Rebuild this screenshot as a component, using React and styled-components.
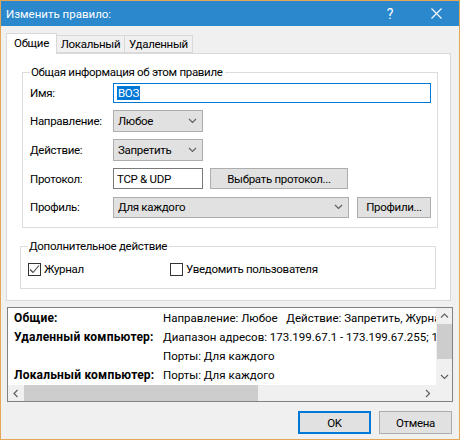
import React from 'react'
import styled, { createGlobalStyle } from 'styled-components'

const GlobalStyle = createGlobalStyle`
  html, body {
    margin: 0;
    padding: 0;
    background: #f0f0f0;
  }
  * {
    box-sizing: border-box;
  }
`

const Window = styled.div`
  width: 460px;
  height: 440px;
  border: 1px solid #e2a857;
  background: #f0f0f0;
  display: flex;
  flex-direction: column;
  font-family: Roboto, "Liberation Sans", sans-serif;
  font-size: 11.5px;
  letter-spacing: -0.3px;
  color: #000;
  overflow: hidden;
`

const TitleBar = styled.div`
  height: 25px;
  flex: none;
  background: #2b88cd;
  color: #fff;
  display: flex;
  align-items: center;
  padding-left: 5px;
`

const Title = styled.div`
  flex: 1;
  font-size: 11.5px;
  letter-spacing: 0;
  line-height: 20px;
`

const TitleBtn = styled.div`
  width: 46px;
  height: 25px;
  display: flex;
  align-items: center;
  justify-content: center;
  font-size: 14px;
`

const Body = styled.div`
  flex: 1;
  display: flex;
  flex-direction: column;
  padding: 7px 6px 0 5px;
`

const TabList = styled.div`
  display: flex;
  align-items: flex-end;
  height: 20px;
  position: relative;
  z-index: 1;
`

const Tab = styled.div`
  width: ${p => p.$w}px;
  height: ${p => (p.$active ? 21 : 18)}px;
  margin-bottom: ${p => (p.$active ? -1 : 0)}px;
  border: 1px solid #d9d9d9;
  border-bottom: ${p => (p.$active ? 'none' : '1px solid #d9d9d9')};
  border-left: ${p => (p.$first || p.$active ? '1px solid #d9d9d9' : 'none')};
  background: ${p => (p.$active ? '#fff' : '#f0f0f0')};
  display: flex;
  align-items: center;
  justify-content: center;
  padding-bottom: ${p => (p.$active ? 2 : 0)}px;
  line-height: 14px;
`

const Panel = styled.div`
  width: 445px;
  height: 248px;
  background: #fff;
  border: 1px solid #d9d9d9;
  padding: 10px 0 0 15px;
  display: flex;
  flex-direction: column;
`

const Group = styled.fieldset`
  margin: ${p => p.$top}px 0 0 ${p => p.$left}px;
  width: 416px;
  min-width: 0;
  border: 1px solid #dcdcdc;
  padding: ${p => p.$pad};
  display: flex;
  flex-direction: column;
  gap: 7px;
`

const Legend = styled.legend`
  padding: 0 2px 0 1px;
  margin-left: 0;
  line-height: 16px;
`

const Row = styled.div`
  display: flex;
  align-items: center;
  height: ${p => p.$h}px;
`

const Label = styled.div`
  width: 83px;
  flex: none;
`

const TextInput = styled.div`
  width: ${p => p.$w}px;
  height: ${p => p.$h}px;
  border: 1px solid ${p => (p.$focus ? '#0078d7' : '#7a7a7a')};
  background: #fff;
  display: flex;
  align-items: center;
  padding-left: 3px;
`

const Selected = styled.span`
  background: #0078d7;
  color: #fff;
  line-height: 14px;
  padding: 0 1px;
`

const Select = styled.div`
  width: ${p => p.$w}px;
  height: ${p => p.$h}px;
  border: 1px solid #adadad;
  background: #e1e1e1;
  display: flex;
  align-items: center;
  justify-content: space-between;
  padding: 0 5px 0 4px;
`

const Button = styled.div`
  width: ${p => p.$w}px;
  height: ${p => p.$h}px;
  margin-left: ${p => p.$ml || 0}px;
  border: ${p => (p.$default ? '2px solid #0078d7' : '1px solid #adadad')};
  background: #e1e1e1;
  display: flex;
  align-items: center;
  justify-content: center;
`

const CheckRow = styled.div`
  display: flex;
  align-items: center;
  height: 16px;
`

const CheckItem = styled.label`
  display: flex;
  align-items: center;
  gap: 3px;
  width: ${p => p.$w}px;
`

const Box = styled.span`
  width: 13px;
  height: 13px;
  border: 1px solid #333;
  background: #fff;
  display: flex;
`

const Info = styled.div`
  margin: 6px 0 0 1px;
  width: 446px;
  height: 95px;
  border: 1px solid #828282;
  background: #fff;
  display: grid;
  grid-template-columns: 1fr 16px;
  grid-template-rows: 1fr 16px;
`

const InfoContent = styled.div`
  overflow: hidden;
  padding-left: 6px;
  display: grid;
  grid-template-columns: 149px max-content;
  grid-auto-rows: 19px;
  align-items: center;
  white-space: pre;
`

const InfoKey = styled.div`
  font-weight: 700;
  font-size: 12px;
  letter-spacing: 0.2px;
`

const InfoValue = styled.div`
  letter-spacing: 0;
`

const ScrollV = styled.div`
  background: #f0f0f0;
  display: flex;
  flex-direction: column;
  align-items: center;
`

const ScrollH = styled.div`
  background: #f0f0f0;
  display: flex;
  align-items: center;
`

const Thumb = styled.div`
  background: #cdcdcd;
  ${p => (p.$vertical ? 'width: 15px; height: 35px;' : 'height: 16px; width: 234px;')}
`

const Arrow = styled.div`
  width: 16px;
  height: 16px;
  display: flex;
  align-items: center;
  justify-content: center;
  flex: none;
`

const Spacer = styled.div`
  flex: 1;
`

const Corner = styled.div`
  background: #f0f0f0;
`

const Footer = styled.div`
  display: flex;
  justify-content: flex-end;
  gap: 8px;
  margin: 9px 1px 0 0;
`

const Chevron = ({ dir = 'down', color = '#606060' }) => {
  const pts = {
    down: '1,1 4.5,4.5 8,1',
    up: '1,4.5 4.5,1 8,4.5',
    left: '4.5,1 1,4.5 4.5,8',
    right: '1,1 4.5,4.5 1,8',
  }[dir]
  const vert = dir === 'down' || dir === 'up'
  return (
    <svg width={vert ? 9 : 6} height={vert ? 6 : 9} viewBox={vert ? '0 0 9 6' : '0 0 6 9'}>
      <polyline points={pts} fill="none" stroke={color} strokeWidth="1.2" />
    </svg>
  )
}

const Check = () => (
  <svg width="11" height="11" viewBox="0 0 11 11">
    <polyline points="1,5.5 4,8.5 10,1.5" fill="none" stroke="#444" strokeWidth="1.1" />
  </svg>
)

const CloseIcon = () => (
  <svg width="11" height="11" viewBox="0 0 11 11">
    <path d="M0.5 0.5 L10.5 10.5 M10.5 0.5 L0.5 10.5" stroke="#fff" strokeWidth="1.1" />
  </svg>
)

export default function App() {
  return (
    <>
      <GlobalStyle />
      <Window>
        <TitleBar>
          <Title>Изменить правило:</Title>
          <TitleBtn>?</TitleBtn>
          <TitleBtn>
            <CloseIcon />
          </TitleBtn>
        </TitleBar>
        <Body>
          <TabList>
            <Tab $w={51} $active $first>Общие</Tab>
            <Tab $w={68}>Локальный</Tab>
            <Tab $w={68}>Удаленный</Tab>
          </TabList>
          <Panel>
            <Group $top={0} $left={0} $pad="3px 6px 9px 7px">
              <Legend>Общая информация об этом правиле</Legend>
              <Row $h={20}>
                <Label>Имя:</Label>
                <TextInput $w={318} $h={20} $focus>
                  <Selected>ВОЗ</Selected>
                </TextInput>
              </Row>
              <Row $h={22}>
                <Label>Направление:</Label>
                <Select $w={90} $h={22}>
                  Любое <Chevron />
                </Select>
              </Row>
              <Row $h={22}>
                <Label>Действие:</Label>
                <Select $w={90} $h={22}>
                  Запретить <Chevron />
                </Select>
              </Row>
              <Row $h={21}>
                <Label>Протокол:</Label>
                <TextInput $w={90} $h={21}>TCP &amp; UDP</TextInput>
                <Button $w={138} $h={21} $ml={7}>Выбрать протокол...</Button>
              </Row>
              <Row $h={22}>
                <Label>Профиль:</Label>
                <Select $w={236} $h={21}>
                  Для каждого <Chevron />
                </Select>
                <Button $w={74} $h={21} $ml={8}>Профили...</Button>
              </Row>
            </Group>
            <Group $top={10} $left={-2} $pad="7px 6px 11px 7px">
              <Legend>Дополнительное действие</Legend>
              <CheckRow>
                <CheckItem $w={142}>
                  <Box>
                    <Check />
                  </Box>
                  Журнал
                </CheckItem>
                <CheckItem>
                  <Box />
                  Уведомить пользователя
                </CheckItem>
              </CheckRow>
            </Group>
          </Panel>
          <Info>
            <InfoContent>
              <InfoKey>Общие:</InfoKey>
              <InfoValue>{'Направление: Любое   Действие: Запретить, Журнал'}</InfoValue>
              <InfoKey>Удаленный компьютер:</InfoKey>
              <InfoValue>Диапазон адресов: 173.199.67.1 - 173.199.67.255; 173.199.68.1</InfoValue>
              <div />
              <InfoValue>Порты: Для каждого</InfoValue>
              <InfoKey>Локальный компьютер:</InfoKey>
              <InfoValue>Порты: Для каждого</InfoValue>
            </InfoContent>
            <ScrollV>
              <Arrow>
                <Chevron dir="up" />
              </Arrow>
              <Thumb $vertical />
              <Spacer />
              <Arrow>
                <Chevron dir="down" />
              </Arrow>
            </ScrollV>
            <ScrollH>
              <Arrow>
                <Chevron dir="left" />
              </Arrow>
              <Thumb />
              <Spacer />
              <Arrow>
                <Chevron dir="right" />
              </Arrow>
            </ScrollH>
            <Corner />
          </Info>
          <Footer>
            <Button $w={73} $h={23} $default>OK</Button>
            <Button $w={73} $h={23}>Отмена</Button>
          </Footer>
        </Body>
      </Window>
    </>
  )
}
